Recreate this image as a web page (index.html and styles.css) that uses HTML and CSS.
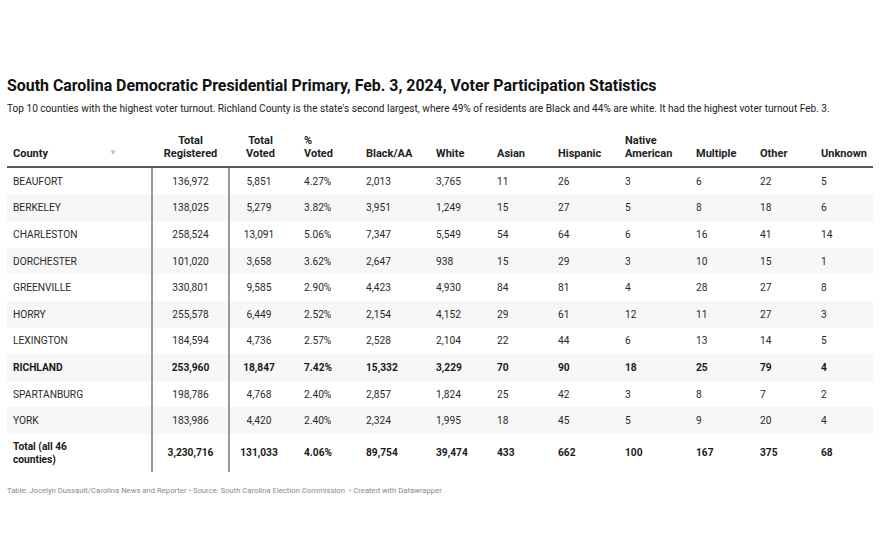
FILE: index.html
```html
<!DOCTYPE html>
<html lang="en">
<head>
<meta charset="utf-8">
<title>SC Democratic Primary Voter Participation</title>
<link rel="stylesheet" href="styles.css">
</head>
<body>
<div class="chart">
  <h1 class="title">South Carolina Democratic Presidential Primary, Feb. 3, 2024, Voter Participation Statistics</h1>
  <p class="desc">Top 10 counties with the highest voter turnout. Richland County is the state's second largest, where 49% of residents are Black and 44% are white. It had the highest voter turnout Feb. 3.</p>
  <table class="data">
    <colgroup>
      <col class="c-county"><col class="c-reg"><col class="c-voted"><col class="c-pct"><col class="c-black"><col class="c-white"><col class="c-asian"><col class="c-hisp"><col class="c-native"><col class="c-mult"><col class="c-other"><col class="c-unk">
    </colgroup>
    <thead>
      <tr>
        <th class="county">County<span class="sort">▼</span></th>
        <th class="reg">Total<br>Registered</th>
        <th class="voted">Total<br>Voted</th>
        <th>%<br>Voted</th>
        <th>Black/AA</th>
        <th>White</th>
        <th>Asian</th>
        <th>Hispanic</th>
        <th>Native<br>American</th>
        <th>Multiple</th>
        <th>Other</th>
        <th>Unknown</th>
      </tr>
    </thead>
    <tbody>
      <tr><td class="county">BEAUFORT</td><td class="reg">136,972</td><td class="voted">5,851</td><td>4.27%</td><td>2,013</td><td>3,765</td><td>11</td><td>26</td><td>3</td><td>6</td><td>22</td><td>5</td></tr>
      <tr><td class="county">BERKELEY</td><td class="reg">138,025</td><td class="voted">5,279</td><td>3.82%</td><td>3,951</td><td>1,249</td><td>15</td><td>27</td><td>5</td><td>8</td><td>18</td><td>6</td></tr>
      <tr><td class="county">CHARLESTON</td><td class="reg">258,524</td><td class="voted">13,091</td><td>5.06%</td><td>7,347</td><td>5,549</td><td>54</td><td>64</td><td>6</td><td>16</td><td>41</td><td>14</td></tr>
      <tr><td class="county">DORCHESTER</td><td class="reg">101,020</td><td class="voted">3,658</td><td>3.62%</td><td>2,647</td><td>938</td><td>15</td><td>29</td><td>3</td><td>10</td><td>15</td><td>1</td></tr>
      <tr><td class="county">GREENVILLE</td><td class="reg">330,801</td><td class="voted">9,585</td><td>2.90%</td><td>4,423</td><td>4,930</td><td>84</td><td>81</td><td>4</td><td>28</td><td>27</td><td>8</td></tr>
      <tr><td class="county">HORRY</td><td class="reg">255,578</td><td class="voted">6,449</td><td>2.52%</td><td>2,154</td><td>4,152</td><td>29</td><td>61</td><td>12</td><td>11</td><td>27</td><td>3</td></tr>
      <tr><td class="county">LEXINGTON</td><td class="reg">184,594</td><td class="voted">4,736</td><td>2.57%</td><td>2,528</td><td>2,104</td><td>22</td><td>44</td><td>6</td><td>13</td><td>14</td><td>5</td></tr>
      <tr class="bold"><td class="county">RICHLAND</td><td class="reg">253,960</td><td class="voted">18,847</td><td>7.42%</td><td>15,332</td><td>3,229</td><td>70</td><td>90</td><td>18</td><td>25</td><td>79</td><td>4</td></tr>
      <tr><td class="county">SPARTANBURG</td><td class="reg">198,786</td><td class="voted">4,768</td><td>2.40%</td><td>2,857</td><td>1,824</td><td>25</td><td>42</td><td>3</td><td>8</td><td>7</td><td>2</td></tr>
      <tr><td class="county">YORK</td><td class="reg">183,986</td><td class="voted">4,420</td><td>2.40%</td><td>2,324</td><td>1,995</td><td>18</td><td>45</td><td>5</td><td>9</td><td>20</td><td>4</td></tr>
      <tr class="bold total"><td class="county">Total (all 46<br>counties)</td><td class="reg">3,230,716</td><td class="voted">131,033</td><td>4.06%</td><td>89,754</td><td>39,474</td><td>433</td><td>662</td><td>100</td><td>167</td><td>375</td><td>68</td></tr>
    </tbody>
  </table>
  <p class="footer">Table: Jocelyn Dussault/Carolina News and Reporter • Source: South Carolina Election Commission &nbsp;• Created with Datawrapper</p>
</div>
</body>
</html>
```
FILE: styles.css
```css
html, body {
  margin: 0;
  padding: 0;
  background: #ffffff;
}
body {
  font-family: Roboto, "Liberation Sans", Arial, sans-serif;
  color: #181818;
}
.chart {
  padding: 76px 7px 0 7px;
}
.title {
  margin: 0;
  font-size: 15.9px;
  line-height: 20px;
  font-weight: 700;
  color: #111;
}
.desc {
  margin: 5px 0 0 0;
  font-size: 10.1px;
  line-height: 15px;
  color: #222;
}
.data {
  margin-top: 18px;
  width: 866px;
  border-collapse: collapse;
  table-layout: fixed;
  font-size: 10.2px;
}
.c-county { width: 145px; }
.c-reg { width: 77px; }
.c-voted { width: 69px; }
.c-pct { width: 62px; }
.c-black { width: 70px; }
.c-white { width: 61px; }
.c-asian { width: 61px; }
.c-hisp { width: 67px; }
.c-native { width: 71px; }
.c-mult { width: 64px; }
.c-other { width: 61px; }
.c-unk { width: 58px; }

.data th {
  text-align: left;
  vertical-align: bottom;
  font-size: 11px;
  line-height: 13px;
  font-weight: 700;
  color: #222;
  padding: 0 6px 6px 6px;
  border-bottom: 2px solid #5a5a5a;
}
.data th.county {
  position: relative;
}
.data th.reg {
  text-align: center;
}
.sort {
  position: absolute;
  left: 102px;
  bottom: 7px;
  font-size: 8px;
  color: #bbb;
}
.data td {
  height: 26.6px;
  padding: 0 6px;
  vertical-align: middle;
  color: #2a2a2a;
  line-height: 13px;
}
.data tbody tr:nth-child(even) td {
  background: #f7f7f7;
}
.data td.reg {
  text-align: center;
  border-left: 2px solid #999;
  border-right: 2px solid #999;
}
.data .voted {
  text-align: center;
  padding-right: 12px;
  padding-left: 2px;
}
.data th.voted {
  padding-right: 8px;
}
.data tr.bold td {
  font-weight: 700;
  color: #1a1a1a;
}
.data tr.total td {
  height: 38px;
}
.footer {
  margin: 14px 0 0 0;
  font-size: 7.7px;
  color: #8a8a8a;
}
```
